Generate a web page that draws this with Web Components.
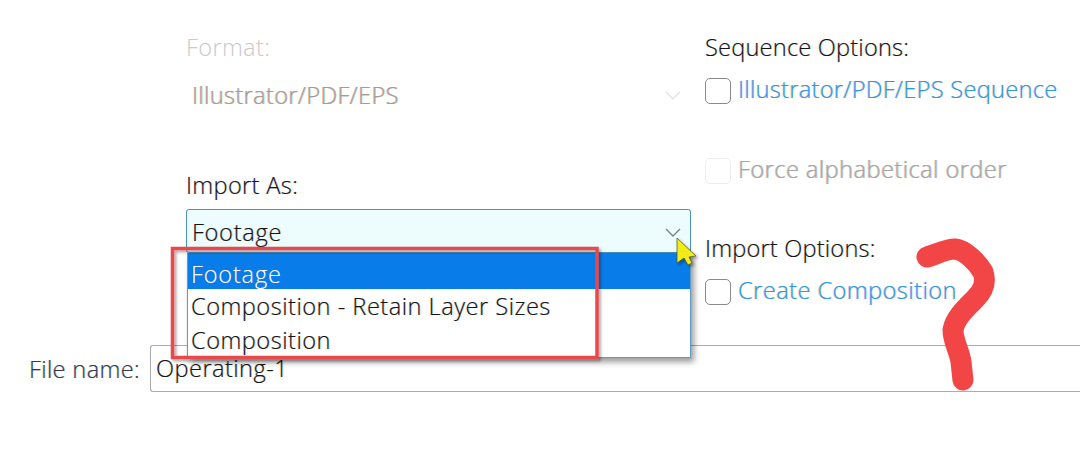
<!DOCTYPE html>
<html>
<head>
<meta charset="utf-8">
<title>Import File</title>
<style>
  html, body { margin: 0; background: #fff; overflow: hidden; }
  body {
    width: 1080px;
    height: 463px;
    font-family: "Open Sans", "Noto Sans", sans-serif;
    font-size: 23.6px;
    font-weight: 350;
    letter-spacing: .35px;
    color: #141414;
    text-shadow: -.6px 0 rgba(230,130,20,.4), .6px 0 rgba(20,130,240,.4);
  }
</style>
</head>
<body>
<import-dialog>
  <opt-field slot="left" label="Format:" disabled>
    <combo-box value="Illustrator/PDF/EPS" disabled></combo-box>
  </opt-field>
  <opt-field slot="left" label="Import As:">
    <combo-box value="Footage" open>
      <menu-item selected>Footage</menu-item>
      <menu-item>Composition - Retain Layer Sizes</menu-item>
      <menu-item>Composition</menu-item>
    </combo-box>
  </opt-field>

  <opt-group slot="right" label="Sequence Options:">
    <check-row style="letter-spacing:.3px">Illustrator/PDF/EPS Sequence</check-row>
    <check-row disabled>Force alphabetical order</check-row>
  </opt-group>
  <opt-group slot="right" label="Import Options:">
    <check-row>Create Composition</check-row>
  </opt-group>

  <file-name slot="file" label="File name:" value="Operating-1"></file-name>
  <screen-marks slot="marks"></screen-marks>
</import-dialog>

<script>
function shadow(el, html) {
  el.attachShadow({ mode: 'open' }).innerHTML = html;
}

customElements.define('import-dialog', class extends HTMLElement {
  constructor() {
    super();
    shadow(this, `
      <style>
        :host { display: block; position: relative; width: 1080px; height: 463px; overflow: hidden; }
        .top { display: grid; grid-template-columns: 505px 1fr; column-gap: 14px; height: 345px; padding-left: 186px; box-sizing: border-box; }
        .col { display: flex; flex-direction: column; padding-top: 30px; }
      </style>
      <div class="top">
        <div class="col"><slot name="left"></slot></div>
        <div class="col"><slot name="right"></slot></div>
      </div>
      <slot name="file"></slot>
      <slot name="marks"></slot>`);
  }
});

customElements.define('opt-field', class extends HTMLElement {
  constructor() {
    super();
    shadow(this, `
      <style>
        :host { display: block; height: 138px; }
        :host(:last-child) { height: auto; }
        .label { height: 34px; line-height: 34px; }
        :host([disabled]) .label { color: #c9c9c9; text-shadow: none; }
        .box { margin-top: 7px; }
        :host([disabled]) .box { margin-top: 9px; }
      </style>
      <div class="label">${this.getAttribute('label')}</div>
      <div class="box"><slot></slot></div>`);
  }
});

customElements.define('combo-box', class extends HTMLElement {
  constructor() {
    super();
    shadow(this, `
      <style>
        :host { display: block; position: relative; }
        .face {
          display: flex; align-items: center; justify-content: space-between;
          height: 44px; box-sizing: border-box; padding: 2px 9px 0 5px;
          border: 1px solid transparent; border-radius: 3px;
        }
        :host([open]) .face { background: #edfdfe; border-color: #4a90c0; letter-spacing: .7px; }
        :host([disabled]) .face { color: #a89c92; padding-top: 0; }
        svg { display: block; }
        polyline { fill: none; stroke: #75868f; stroke-width: 1.4; }
        :host([disabled]) polyline { stroke: #e2e2e2; }
        .menu {
          display: none; position: absolute; left: 1px; right: 0; top: 44px; z-index: 2;
          background: #fff; border: 1px solid #5e9cc6; border-top: 0;
          box-shadow: 3px 4px 6px rgba(0,0,0,.4);
        }
        :host([open]) .menu { display: block; }
      </style>
      <div class="face">
        <span>${this.getAttribute('value')}</span>
        <svg width="16" height="9" viewBox="0 0 16 9"><polyline points="1,1 8,8 15,1"/></svg>
      </div>
      <div class="menu"><slot></slot></div>`);
  }
});

customElements.define('menu-item', class extends HTMLElement {
  constructor() {
    super();
    shadow(this, `
      <style>
        :host { display: block; height: 34px; line-height: 34px; padding-left: 3px; white-space: nowrap; letter-spacing: .5px; }
        :host([selected]) { height: 36px; line-height: 42px; background: #087ce9; color: #fff; letter-spacing: .8px; }
      </style>
      <slot></slot>`);
  }
});

customElements.define('opt-group', class extends HTMLElement {
  constructor() {
    super();
    shadow(this, `
      <style>
        :host { display: block; height: 201px; }
        :host(:last-child) { height: auto; }
        .label { height: 34px; line-height: 34px; letter-spacing: .2px; }
        .rows { display: flex; flex-direction: column; gap: 40px; margin-top: 7px; }
      </style>
      <div class="label">${this.getAttribute('label')}</div>
      <div class="rows"><slot></slot></div>`);
  }
});

customElements.define('check-row', class extends HTMLElement {
  constructor() {
    super();
    shadow(this, `
      <style>
        :host { display: flex; align-items: center; gap: 7px; height: 40px; color: #2c98e8; white-space: nowrap; letter-spacing: .45px; }
        :host([disabled]) { color: #a6a6a6; }
        .box { width: 26px; height: 26px; box-sizing: border-box; border: 1.5px solid #8a8a8a; border-radius: 5px; background: #fff; }
        :host([disabled]) .box { border-color: #ededed; }
        .text { margin-bottom: 5px; }
      </style>
      <span class="box"></span><span class="text"><slot></slot></span>`);
  }
});

customElements.define('file-name', class extends HTMLElement {
  constructor() {
    super();
    shadow(this, `
      <style>
        :host { display: flex; align-items: center; height: 47px; }
        .label { width: 150px; box-sizing: border-box; padding-left: 29px; color: #2b3c50; }
        .input {
          flex: 1; height: 47px; box-sizing: border-box; line-height: 45px; padding-left: 5px;
          border: 1px solid #ababab; border-right: 0; border-radius: 3px 0 0 3px; letter-spacing: .45px;
        }
      </style>
      <span class="label">${this.getAttribute('label')}</span>
      <span class="input">${this.getAttribute('value')}</span>`);
  }
});

// red marker, question mark and the pointer painted over the dialog
customElements.define('screen-marks', class extends HTMLElement {
  constructor() {
    super();
    shadow(this, `
      <style>
        :host { display: block; position: absolute; inset: 0; z-index: 3; pointer-events: none; }
        svg { display: block; }
      </style>
      <svg width="1080" height="463" viewBox="0 0 1080 463">
        <defs>
          <filter id="soft" x="-20%" y="-20%" width="140%" height="140%">
            <feDropShadow dx="2" dy="2" stdDeviation="1.5" flood-color="#000" flood-opacity=".35"/>
          </filter>
        </defs>
        <rect x="172.5" y="248.5" width="424.5" height="109" fill="none" stroke="#e8484c" stroke-width="3.5" filter="url(#soft)"/>
        <path d="M927 257 C935 255 945 249 955 249 C965 250 977 262 983 272 C987 284 982 292 975 299 C966 308 955 318 953 330 C953 342 960 352 961 362 L963 380"
          fill="none" stroke="#f24545" stroke-width="21" stroke-linecap="round" stroke-linejoin="round"/>
        <path d="M677 238 L696 256 L689 257 L692 263 L688 265 L684 258 L677 263 Z"
          fill="#f2ec18" stroke="#4a4a20" stroke-width=".7" filter="url(#soft)"/>
      </svg>`);
  }
});
</script>
</body>
</html>
